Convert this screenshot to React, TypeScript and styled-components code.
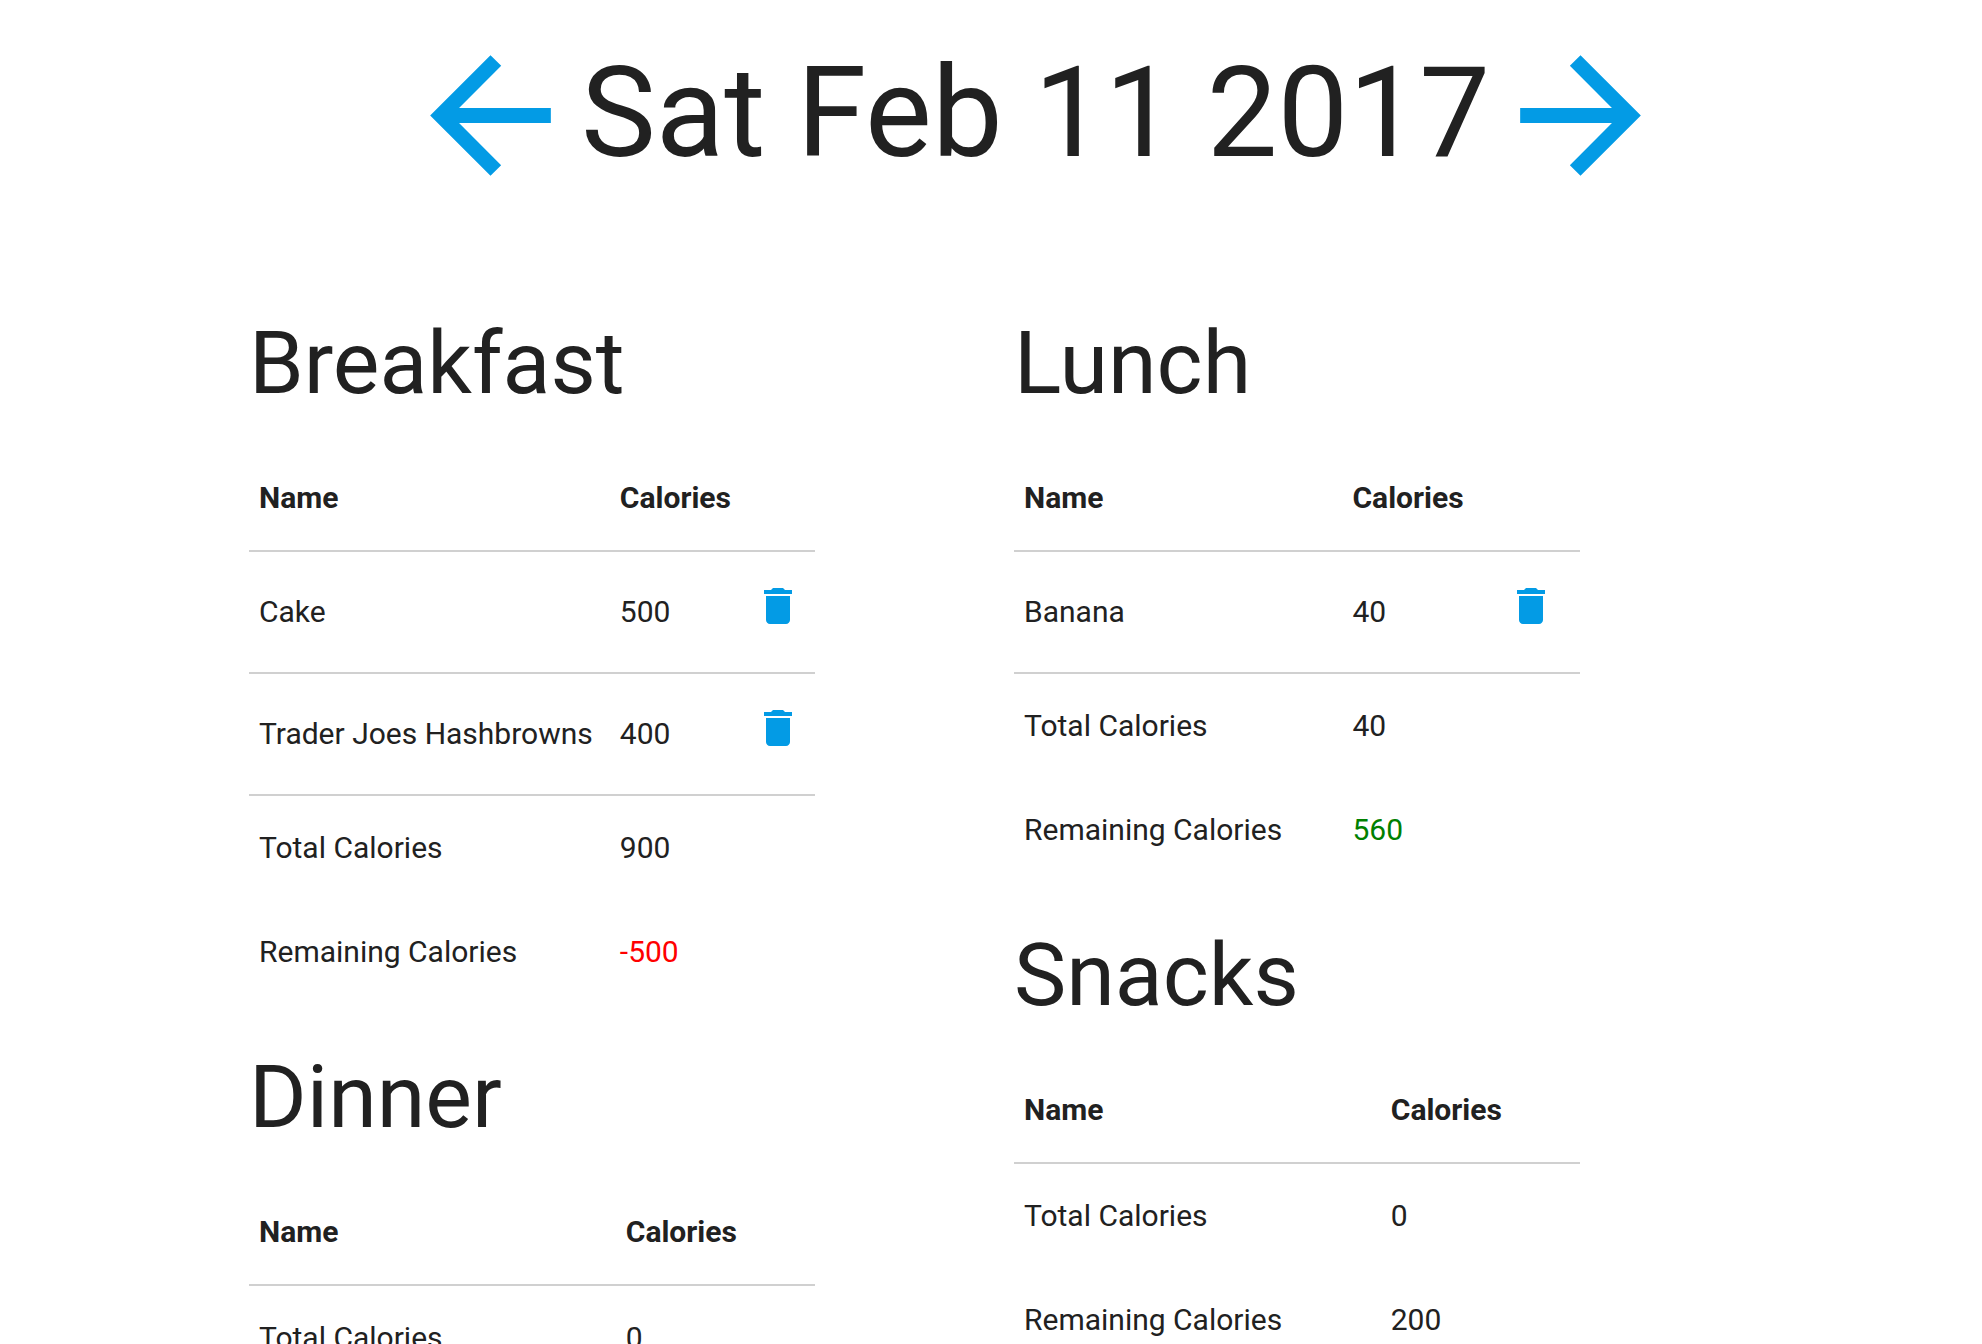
import React, { useState } from "react";
import styled, { createGlobalStyle } from "styled-components";

const GlobalStyle = createGlobalStyle`
  *, *::before, *::after {
    box-sizing: border-box;
  }

  body {
    margin: 0;
    background: #ffffff;
    color: #212121;
    font-family: Roboto, "Liberation Sans", sans-serif;
    font-size: 30px;
    line-height: 44px;
  }
`;

const Page = styled.main`
  padding: 0 160px 0 249px;
`;

const DayHeader = styled.header`
  display: flex;
  justify-content: center;
  align-items: flex-start;
  padding: 25px 0 64px;
`;

const DayTitle = styled.h1`
  margin: 0;
  font-size: 126px;
  font-weight: 400;
  line-height: 176px;
  white-space: nowrap;
`;

const IconButton = styled.button`
  display: block;
  padding: 0;
  border: 0;
  background: none;
  color: #039be5;
  cursor: pointer;
`;

const ArrowButton = styled(IconButton)`
  flex: none;

  svg {
    display: block;
    width: 181px;
    height: 181px;
  }
`;

const DeleteButton = styled(IconButton)`
  width: 50px;
  height: 60px;

  svg {
    display: block;
    width: 48px;
    height: 60px;
  }
`;

const Meals = styled.div`
  display: grid;
  grid-template-columns: repeat(2, minmax(0, 1fr));
  column-gap: 199px;
  align-items: start;
  padding-right: 242px;
`;

const MealTitle = styled.h2`
  margin: 0;
  padding: 45px 0 35px;
  font-size: 88px;
  font-weight: 400;
  line-height: 96px;
`;

const MealTable = styled.table`
  width: 100%;
  border-collapse: collapse;
`;

const Row = styled.tr<{ $ruled?: boolean }>`
  border-bottom: ${(p) => (p.$ruled ? "2px solid #d0d0d0" : "0")};
`;

const HeadCell = styled.th`
  padding: 30px 10px;
  font-weight: 700;
  text-align: left;
`;

const Cell = styled.td<{ $tone?: Tone }>`
  padding: 30px 10px;
  text-align: left;
  vertical-align: middle;
  color: ${(p) =>
    p.$tone === "over" ? "#ff0000" : p.$tone === "under" ? "#008000" : "inherit"};
`;

type Tone = "over" | "under" | "plain";
type Food = { name: string; calories: number };
type Meal = { title: string; budget: number; foods: Food[] };

const COLUMNS: Meal[][] = [
  [
    {
      title: "Breakfast",
      budget: 400,
      foods: [
        { name: "Cake", calories: 500 },
        { name: "Trader Joes Hashbrowns", calories: 400 },
      ],
    },
    { title: "Dinner", budget: 800, foods: [] },
  ],
  [
    { title: "Lunch", budget: 600, foods: [{ name: "Banana", calories: 40 }] },
    { title: "Snacks", budget: 200, foods: [] },
  ],
];

const BackIcon = () => (
  <svg viewBox="0 0 24 24" fill="currentColor" aria-hidden="true">
    <path d="M20 11H7.83l5.59-5.59L12 4l-8 8 8 8 1.41-1.41L7.83 13H20z" />
  </svg>
);

const ForwardIcon = () => (
  <svg viewBox="0 0 24 24" fill="currentColor" aria-hidden="true">
    <path d="M12 4l-1.41 1.41L16.17 11H4v2h12.17l-5.58 5.59L12 20l8-8z" />
  </svg>
);

const TrashIcon = () => (
  <svg viewBox="0 0 24 30" fill="currentColor" aria-hidden="true">
    <path d="M6 19c0 1.1.9 2 2 2h8c1.1 0 2-.9 2-2V7H6v12zM19 4h-3.5l-1-1h-5l-1 1H5v2h14V4z" />
  </svg>
);

function MealSection({
  meal,
  onDelete,
}: {
  meal: Meal;
  onDelete: (food: Food) => void;
}) {
  const total = meal.foods.reduce((sum, food) => sum + food.calories, 0);
  const remaining = meal.budget - total;
  const tone: Tone =
    total === 0 ? "plain" : remaining < 0 ? "over" : "under";

  return (
    <section>
      <MealTitle>{meal.title}</MealTitle>
      <MealTable aria-label={meal.title}>
        <thead>
          <Row $ruled>
            <HeadCell scope="col">Name</HeadCell>
            <HeadCell scope="col">Calories</HeadCell>
            <Cell />
          </Row>
        </thead>
        <tbody>
          {meal.foods.map((food) => (
            <Row key={food.name} $ruled>
              <Cell>{food.name}</Cell>
              <Cell>{food.calories}</Cell>
              <Cell>
                <DeleteButton
                  type="button"
                  aria-label={`Delete ${food.name}`}
                  onClick={() => onDelete(food)}
                >
                  <TrashIcon />
                </DeleteButton>
              </Cell>
            </Row>
          ))}
          <Row>
            <Cell>Total Calories</Cell>
            <Cell>{total}</Cell>
            <Cell />
          </Row>
          <Row>
            <Cell>Remaining Calories</Cell>
            <Cell $tone={tone}>{remaining}</Cell>
            <Cell />
          </Row>
        </tbody>
      </MealTable>
    </section>
  );
}

export default function App() {
  const [date, setDate] = useState(() => new Date(2017, 1, 11));
  const [columns, setColumns] = useState(COLUMNS);

  const moveBy = (days: number) =>
    setDate(
      (d) => new Date(d.getFullYear(), d.getMonth(), d.getDate() + days)
    );

  const removeFood = (title: string, food: Food) =>
    setColumns((current) =>
      current.map((meals) =>
        meals.map((meal) =>
          meal.title === title
            ? { ...meal, foods: meal.foods.filter((f) => f !== food) }
            : meal
        )
      )
    );

  return (
    <>
      <GlobalStyle />
      <Page>
        <DayHeader>
          <ArrowButton
            type="button"
            aria-label="Previous day"
            onClick={() => moveBy(-1)}
          >
            <BackIcon />
          </ArrowButton>
          <DayTitle>{date.toDateString()}</DayTitle>
          <ArrowButton
            type="button"
            aria-label="Next day"
            onClick={() => moveBy(1)}
          >
            <ForwardIcon />
          </ArrowButton>
        </DayHeader>
        <Meals>
          {columns.map((meals) => (
            <div key={meals[0].title}>
              {meals.map((meal) => (
                <MealSection
                  key={meal.title}
                  meal={meal}
                  onDelete={(food) => removeFood(meal.title, food)}
                />
              ))}
            </div>
          ))}
        </Meals>
      </Page>
    </>
  );
}
